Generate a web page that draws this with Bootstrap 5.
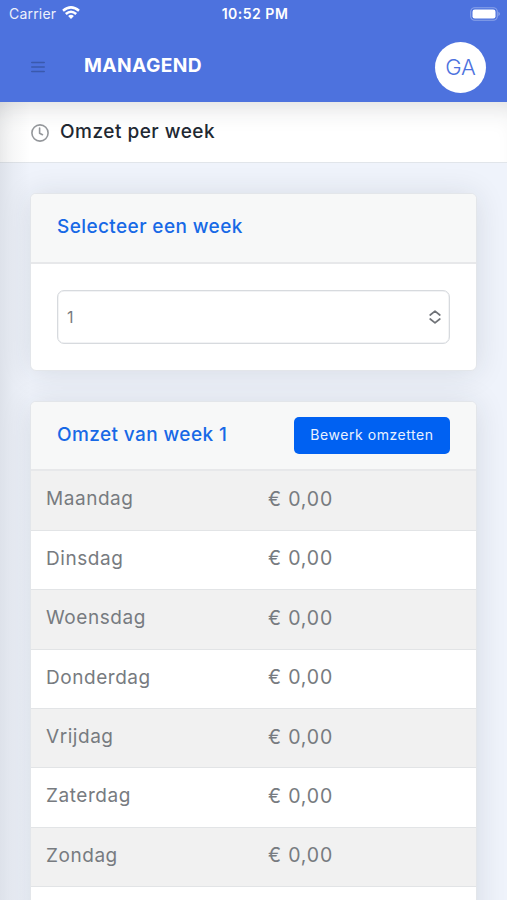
<!DOCTYPE html>
<html lang="nl">
<head>
<meta charset="utf-8">
<meta name="viewport" content="width=device-width, initial-scale=1">
<title>Managend</title>
<link href="https://cdn.jsdelivr.net/npm/bootstrap@5.3.0/dist/css/bootstrap.min.css" rel="stylesheet">
<style>
html, body { height: 900px; overflow: hidden; }
body { font-family: Inter, "Liberation Sans", sans-serif; background: #eff3fb; color: #212832; }
.app-top { height: 102px; background: #4d72de; color: #fff; }
.status { height: 28px; font-size: 14px; line-height: 28px; padding: 0 7px 0 9px; }
.carrier { letter-spacing: .2px; opacity: .9; }
.clock { font-size: 14px; letter-spacing: .5px; margin-right: -1px; }
.navrow { height: 74px; padding: 4px 21px 0 31px; }
.brand { font-size: 19.2px; font-weight: 700; line-height: 24px; margin: -4px 0 0 39px; letter-spacing: .4px; }
.avatar { width: 51px; height: 51px; background: #fff; color: #4d72de; font-size: 22px; font-weight: 350; letter-spacing: -.2px; }
.page-head { height: 61px; padding: 0 31px; background: #fff; border-bottom: 1px solid #e1e5ea; box-shadow: inset 0 22px 26px -18px rgba(33,40,50,.17); }
.page-head svg { margin-top: 1px; }
.page-head h1 { font-size: 19px; font-weight: 500; line-height: 24px; margin: 0 0 1px 11px; letter-spacing: .5px; }
.side-shade { position: absolute; left: 0; top: 102px; width: 30px; height: 798px; background: linear-gradient(90deg, rgba(33,40,50,.085), rgba(33,40,50,.035) 45%, transparent); pointer-events: none; }
.main-col { padding: 30px 30px 0; }
.panel { border: 1px solid #e3e6ea; border-radius: 6px; box-shadow: 0 2px 30px rgba(33,40,50,.12); --bs-card-border-radius: 6px; --bs-card-inner-border-radius: 5px; }
.panel + .panel { margin-top: 30px; }
.panel .card-header { background: #f7f8f8; border-bottom: 2px solid #e7e8ea; padding: 0 26px; }
.panel .card-body { padding: 26px; }
.head-one { height: 70px; }
.head-two { height: 69px; }
.panel h2 { font-size: 19px; font-weight: 500; line-height: 24px; color: #1769e6; margin: 0 0 2px; letter-spacing: .4px; }
.select-box { height: 54px; border: 1.5px solid #d7dade; box-shadow: inset 0 0 0 .5px #e6e8eb; border-radius: 7px; padding: 0 8px 0 9px; color: #777b80; font-size: 16px; background: #fff; }
.btn-edit { width: 156px; height: 37px; padding: 0 0 3px; background: #0061f2; border-radius: 5px; color: #e9f1ff; font-size: 14px; border: 0; letter-spacing: .55px; }
.days { font-size: 19px; table-layout: fixed; }
.days > tbody > tr > td { height: 59.4px; padding: 0 15px 2px; color: #777b80; border-color: #e2e4e6; border-bottom-width: 1px; vertical-align: middle; letter-spacing: .55px; }
.days > tbody > tr > td + td { font-size: 19.5px; letter-spacing: .85px; padding-left: 16px; }
.days > tbody > tr:nth-of-type(odd) > td { --bs-table-accent-bg: #f1f1f1; color: #777b80; }
</style>
<script src="https://cdn.jsdelivr.net/npm/bootstrap@5.3.0/dist/js/bootstrap.bundle.min.js" defer></script>
</head>
<body>
<header class="app-top">
  <div class="status row g-0">
    <div class="col d-flex align-items-center"><span class="carrier">Carrier</span>
      <svg style="margin-left:6px;margin-top:-2px" width="18" height="14" viewBox="0 0 18 14" fill="none" stroke="#fff" stroke-width="2.5"><path d="M1 4.8Q9-2 17 4.8M3.8 8Q9 3.4 14.2 8"/><path d="M6.1 9.9Q9 7.8 11.9 9.9L9 13Z" fill="#fff" stroke="none"/></svg>
    </div>
    <div class="col-auto clock fw-semibold">10:52 PM</div>
    <div class="col d-flex align-items-center justify-content-end">
      <svg style="margin:-1px -1px 0 0" width="31" height="14" viewBox="0 0 31 14"><rect x=".7" y=".7" width="26.6" height="12.6" rx="4" fill="none" stroke="#fff" stroke-opacity=".35" stroke-width="1.1"/><rect x="2.5" y="2.5" width="23" height="9" rx="2.3" fill="#fff"/><path d="M28.5 4.8Q31 7 28.5 9.2Z" fill="#fff" fill-opacity=".45"/></svg>
    </div>
  </div>
  <div class="navrow d-flex align-items-center">
    <svg width="14" height="12" viewBox="0 0 14 12" stroke="#3a59ad" stroke-width="1.6" stroke-linecap="round"><path d="M.8 1.5h12.4M.8 6h12.4M.8 10.5h12.4"/></svg>
    <div class="brand">MANAGEND</div>
    <div class="avatar rounded-circle d-flex align-items-center justify-content-center ms-auto">GA</div>
  </div>
</header>
<div class="page-head d-flex align-items-center">
  <svg width="18" height="18" viewBox="0 0 18 18" fill="none" stroke="#94979b" stroke-width="1.6" stroke-linecap="round" stroke-linejoin="round"><circle cx="9" cy="9" r="8.1"/><path d="M8.6 4v5.2l2.9 1.5"/></svg>
  <h1>Omzet per week</h1>
</div>
<main class="main-col">
  <section class="card panel">
    <div class="card-header head-one d-flex align-items-center"><h2>Selecteer een week</h2></div>
    <div class="card-body">
      <div class="select-box d-flex align-items-center justify-content-between"><span>1</span>
        <svg width="12" height="14" viewBox="0 0 12 14" fill="none" stroke="#6f7277" stroke-width="1.7" stroke-linecap="round" stroke-linejoin="round"><path d="M1.2 5 6 1.2 10.8 5M1.2 9 6 12.8 10.8 9"/></svg>
      </div>
    </div>
  </section>
  <section class="card panel">
    <div class="card-header head-two d-flex align-items-center justify-content-between"><h2>Omzet van week 1</h2><button type="button" class="btn btn-edit">Bewerk omzetten</button></div>
    <table class="table table-striped days mb-0">
      <colgroup><col style="width:221px"><col></colgroup>
      <tbody>
        <tr><td>Maandag</td><td>€ 0,00</td></tr>
        <tr><td>Dinsdag</td><td>€ 0,00</td></tr>
        <tr><td>Woensdag</td><td>€ 0,00</td></tr>
        <tr><td>Donderdag</td><td>€ 0,00</td></tr>
        <tr><td>Vrijdag</td><td>€ 0,00</td></tr>
        <tr><td>Zaterdag</td><td>€ 0,00</td></tr>
        <tr><td>Zondag</td><td>€ 0,00</td></tr>
        <tr><td></td><td></td></tr>
      </tbody>
    </table>
  </section>
</main>
<div class="side-shade"></div>
</body>
</html>
